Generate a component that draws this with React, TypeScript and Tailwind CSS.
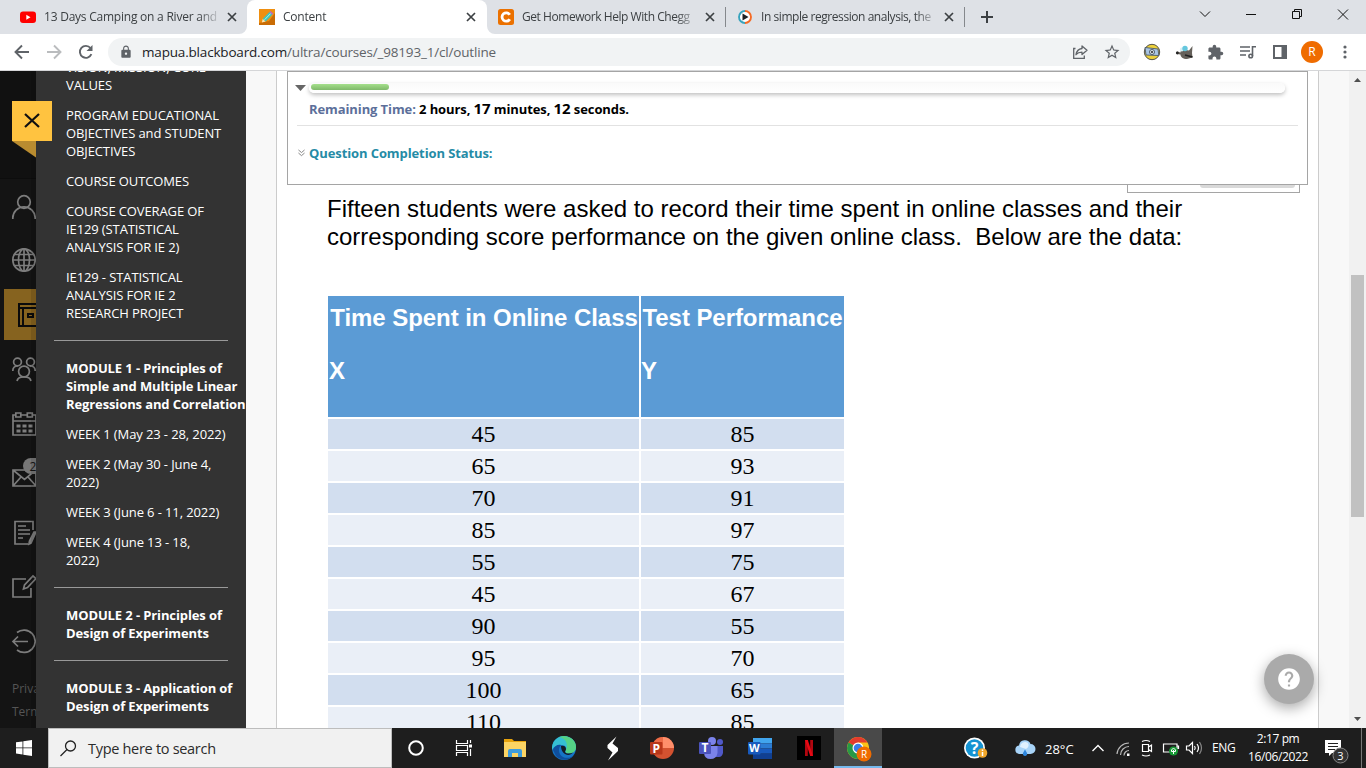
import React from 'react';
import { MdExtension, MdLock, MdStarBorder, MdHelp } from 'react-icons/md';

interface TabProps {
  title: string;
  icon: React.ReactNode;
  active?: boolean;
  separator?: boolean;
  titleClass: string;
}

interface MenuSection {
  heading?: string;
  items: string[];
}

const menuSections: MenuSection[] = [
  {
    items: [
      'VISION, MISSION, CORE\nVALUES',
      'PROGRAM EDUCATIONAL\nOBJECTIVES and STUDENT\nOBJECTIVES',
      'COURSE OUTCOMES',
      'COURSE COVERAGE OF\nIE129 (STATISTICAL\nANALYSIS FOR IE 2)',
      'IE129 - STATISTICAL\nANALYSIS FOR IE 2\nRESEARCH PROJECT',
    ],
  },
  {
    heading: 'MODULE 1 - Principles of\nSimple and Multiple Linear\nRegressions and Correlation',
    items: [
      'WEEK 1 (May 23 - 28, 2022)',
      'WEEK 2 (May 30 - June 4,\n2022)',
      'WEEK 3 (June 6 - 11, 2022)',
      'WEEK 4 (June 13 - 18,\n2022)',
    ],
  },
  { heading: 'MODULE 2 - Principles of\nDesign of Experiments', items: [] },
  { heading: 'MODULE 3 - Application of\nDesign of Experiments', items: [] },
];

const scores: [number, number][] = [
  [45, 85],
  [65, 93],
  [70, 91],
  [85, 97],
  [55, 75],
  [45, 67],
  [90, 55],
  [95, 70],
  [100, 65],
  [110, 85],
];

const Tab: React.FC<TabProps> = ({ title, icon, active, separator, titleClass }) => (
  <div
    className={`relative flex h-[34px] shrink-0 items-center ${
      active ? 'w-[240px] rounded-t-lg bg-white pl-3' : 'w-[239px] pl-[11px]'
    }`}
  >
    {active && (
      <>
        <svg className="absolute bottom-0 -left-2" width="8" height="8" viewBox="0 0 8 8">
          <path d="M8 0v8H0a8 8 0 0 0 8-8z" fill="#fff" />
        </svg>
        <svg className="absolute -right-2 bottom-0" width="8" height="8" viewBox="0 0 8 8">
          <path d="M0 0v8h8a8 8 0 0 1-8-8z" fill="#fff" />
        </svg>
      </>
    )}
    <div className="flex w-6 shrink-0">{icon}</div>
    <div className="w-[174px] shrink-0 overflow-hidden text-xs leading-4 whitespace-nowrap text-[#3c4043] [mask-image:linear-gradient(to_right,#000_154px,transparent_178px)]">
      <span className={titleClass}>{title}</span>
    </div>
    <svg className="ml-[9px]" width="10" height="10" viewBox="0 0 10 10" stroke="#3c4043" strokeWidth="1.7">
      <path d="M1 1l8 8M9 1L1 9" />
    </svg>
    {separator && <div className="absolute top-[7px] right-0 h-5 w-px bg-[#85888c]" />}
  </div>
);

// Tab strip with window controls
const TabStrip: React.FC = () => (
  <div className="flex h-[34px] bg-[#dee1e6]">
    <div className="flex w-[247px] shrink-0 pl-[9px]">
      <Tab
        title="13 Days Camping on a River and"
        titleClass="tracking-[-0.23px]"
        icon={
          <svg width="16" height="16" viewBox="0 0 16 16">
            <rect y="2.5" width="16" height="11.5" rx="3" fill="#f00" />
            <path d="M6.3 5.8v5l4.2-2.5z" fill="#fff" />
          </svg>
        }
      />
    </div>
    <Tab
      active
      title="Content"
      titleClass="tracking-[-0.22px]"
      icon={
        <svg width="16" height="16" viewBox="0 0 16 16">
          <rect width="16" height="16" fill="#ef8f10" />
          <path d="M16 4v12H0v-2l10-2z" fill="#c96c05" />
          <path d="M2.8 13.6l1-3.8 2.9 2.7z" fill="#f8e3b5" />
          <path d="M3.8 9.8L10.4 3l2.9 2.8-6.6 6.7z" fill="#3fc4ba" />
          <path d="M5.5 10.8l6.3-6.4" stroke="#b5f0e4" />
          <path d="M10.4 3l1-1 3 2.8-1.1 1z" fill="#b36bd2" />
        </svg>
      }
    />
    <Tab
      separator
      title="Get Homework Help With Chegg"
      titleClass="tracking-[-0.45px]"
      icon={
        <svg width="16" height="16" viewBox="0 0 16 16">
          <rect width="16" height="16" rx="2.5" fill="#eb7100" />
          <path d="M11.8 10.2A4.2 4.2 0 1 1 11.8 5.8" fill="none" stroke="#fff" strokeWidth="2.8" />
        </svg>
      }
    />
    <Tab
      separator
      title="In simple regression analysis, the"
      titleClass="tracking-[-0.44px]"
      icon={
        <svg width="16" height="16" viewBox="0 0 16 16">
          <circle cx="8" cy="8" r="6.5" fill="#fff" />
          <path d="M8 2a6 6 0 0 0 0 12" fill="none" stroke="#37a3bd" strokeWidth="1.9" />
          <path d="M8 2a6 6 0 0 1 0 12" fill="none" stroke="#f46a25" strokeWidth="1.9" />
          <path d="M5.5 4.5v7L11.5 8z" fill="#1d2023" />
        </svg>
      }
    />
    <svg className="mt-[11px] ml-4" width="12" height="12" viewBox="0 0 12 12" stroke="#3c4043" strokeWidth="2">
      <path d="M6 0v12M0 6h12" />
    </svg>
    <svg className="ml-auto" width="184" height="34" viewBox="1182 0 184 34" fill="none" stroke="#111" strokeWidth="1">
      <path d="M1200 11.5l5 5 5-5" />
      <path d="M1246 14.5h10" />
      <path d="M1292.5 11.5h7v7h-7zM1294.5 11.5v-2h7v7h-2" />
      <path d="M1338 9.5l10 10M1348 9.5l-10 10" />
    </svg>
  </div>
);

const Toolbar: React.FC = () => (
  <div className="flex h-[37px] shrink-0 items-center border-b border-[#d5d6d8] bg-white">
    <svg className="shrink-0" width="108" height="36" viewBox="0 0 108 36" fill="none" stroke="#5f6368" strokeWidth="1.9">
      <path d="M29 18H16M22 11.5L15.5 18l6.5 6.5" />
      <path d="M47 18h13M54 11.5L60.5 18 54 24.5" stroke="#babcbe" />
      <path d="M91.4 20.2a6 6 0 1 1-.9-6.200" />
      <path d="M92.5 11v6h-6z" fill="#5f6368" stroke="none" />
    </svg>
    <div className="flex h-7 w-[1022px] shrink-0 items-center rounded-full bg-[#f1f3f4] pl-[11px]">
      <MdLock size={14} className="text-[#5f6368]" />
      <div className="ml-[9px] text-[13.5px] leading-5 tracking-[-0.18px] whitespace-nowrap text-[#5f6368]">
        <span className="text-[#202124]">mapua.blackboard.com</span>/ultra/courses/_98193_1/cl/outline
      </div>
      <svg className="mr-3.5 ml-auto" width="17" height="16" viewBox="0 0 17 16" fill="none" stroke="#5f6368" strokeWidth="1.3">
        <path d="M3.5 4.5H1.7v9.8h10.6v-2.8" />
        <path d="M10 2l5 4.3-5 4.3V8.2c-2.7 0-4.4.6-6 2.5.5-3.2 2.5-5.8 6-6.2z" strokeLinejoin="round" />
      </svg>
      <MdStarBorder size={18} className="mr-[9px] text-[#5f6368]" />
    </div>
    <svg className="shrink-0" width="44" height="22" viewBox="0 0 44 22">
      <circle cx="22" cy="11" r="7.7" fill="#ecd03a" stroke="#444" strokeWidth=".9" />
      <path d="M15 6.500l13 1.500.8 6.500-12.800-.5z" fill="#a9c5e4" stroke="#4a5868" strokeWidth=".9" />
      <circle cx="22" cy="11" r="2.500" fill="#dfe8ef" stroke="#4b5966" />
      <circle cx="22" cy="11" r="1" fill="#222" />
    </svg>
    <svg className="shrink-0" width="24" height="22" viewBox="0 0 24 22">
      <path d="M3 10.5l3.5 1L7 9h5l3 .5L18.5 5l-.5 7 .5 4.500-5.500 1.500c-4 0-6.500-2-6.500-4.500L3 13z" fill="#65605a" />
      <circle cx="7.800" cy="8.500" r="1.900" fill="#d9f1f7" />
      <circle cx="11" cy="7.500" r="2.700" fill="#65c7de" />
      <circle cx="3.300" cy="12" r="1.400" fill="#222" />
      <path d="M11 14l7.500 2" stroke="#222" strokeWidth="1.700" />
    </svg>
    <div className="ml-auto flex h-9 items-center">
      <MdExtension size={17} className="mr-4 text-[#5f6368]" />
      <svg className="mr-[17px]" width="16" height="16" viewBox="0 0 16 16" fill="none" stroke="#5f6368" strokeWidth="1.6">
        <path d="M0 3h10M0 7h10M0 11h6M16 2.800h-3.500V12" />
        <circle cx="10.700" cy="12" r="1.800" />
      </svg>
      <svg className="mr-[14px]" width="14" height="14" viewBox="0 0 14 14">
        <path d="M1 1h12v12H1z" fill="none" stroke="#5f6368" strokeWidth="2" />
        <path d="M8.500 1H13v12H8.500z" fill="#5f6368" />
      </svg>
      <div className="flex size-[22px] items-center justify-center rounded-full bg-[#ef6c00] text-xs text-white">R</div>
      <svg className="mr-[19px] ml-5" width="4" height="14" viewBox="0 0 4 14" fill="#5f6368">
        <circle cx="2" cy="2" r="1.6" />
        <circle cx="2" cy="7" r="1.6" />
        <circle cx="2" cy="12" r="1.6" />
      </svg>
    </div>
  </div>
);

const railIcons: React.ReactNode[] = [
  // Profile
  <g key="profile">
    <circle cx="24" cy="22" r="6.3" />
    <path d="M12.800 39v-1a11.200 11.200 0 0 1 22.400 0v1" />
  </g>,
  // Institution page
  <g key="globe">
    <circle cx="24" cy="26" r="11.2" />
    <ellipse cx="24" cy="26" rx="5.5" ry="11.2" />
    <path d="M24 15v22M13 26h22M14.500 20.500h19M14.500 31.500h19" />
  </g>,
  // Courses
  <g key="courses">
    <path d="M4 1h32v51H4z" fill="#86631f" stroke="none" />
    <g stroke="#0b0b0b" strokeWidth="2">
      <path d="M40 16H19v22h21M19 20h20M23 20v18M28 26h5v3h-5z" />
    </g>
  </g>,
  // Organizations
  <g key="orgs">
    <circle cx="17.5" cy="20" r="3.9" />
    <circle cx="30.5" cy="20" r="3.9" />
    <circle cx="24" cy="29.5" r="5.4" />
    <path d="M12.800 29c0-3 2-5 5-5M35.200 29c0-3-2-5-5-5M17 39c.5-3 3.500-4.200 7-4.200s6.500 1.200 7 4.200" />
  </g>,
  // Calendar
  <g key="calendar">
    <path d="M13 19h23v20H13zM13 25h23" />
    <path d="M15.800 17h5v4h-5zM27.300 17h5v4h-5z" fill="#141414" />
    <path d="M16.500 30h4M22.500 30h4M28.500 30h4M16.500 35h4M22.500 35h4M28.500 35h4" strokeWidth="2.8" />
  </g>,
  // Messages
  <g key="messages">
    <path d="M13 20h23v16H13zM13 20l11.500 9.500L36 20M13 36l8-9M36 36l-8-9" />
    <rect x="23" y="8" width="26" height="16" rx="8" fill="#777" stroke="none" />
    <text x="29.5" y="20.5" fill="#161616" stroke="none" fontSize="12">2</text>
  </g>,
  // Grades
  <g key="grades">
    <path d="M33 26v-8.500H15V40h13M18 22h8M18 26h12M18 30h12M18 34h5" />
    <path d="M36 28l-5 11-2 1 .5-3L34 28z" fill="#777" />
  </g>,
  // Tools
  <g key="tools">
    <path d="M26 21H13v18h18V30" />
    <path d="M33 18l3 2.500-8.500 9-4 1.500 1-4z" />
  </g>,
  // Sign out
  <g key="signout">
    <path d="M17 20.500a11.200 11.200 0 1 1 0 17.500M13 29.500h15M18 24.500l-5 5 5 5" />
  </g>,
];

const CourseRail: React.FC = () => (
  <div className="relative flex w-9 shrink-0 flex-col overflow-hidden bg-[#141414]">
    <div className="mb-px h-[108px] shrink-0 border-b border-[#0d0d0d] bg-[#111]" />
    {railIcons.map((icon, index) => (
      <svg
        key={index}
        className="shrink-0"
        width="36"
        height="54"
        viewBox="0 0 36 54"
        fill="none"
        stroke="#7d7d7d"
        strokeWidth="1.7"
      >
        {icon}
      </svg>
    ))}
    <div className="mt-[11px] pl-3 text-xs leading-[23px] whitespace-nowrap text-[#555]">
      <p>Privacy</p>
      <p>Terms</p>
    </div>
    <div className="absolute inset-y-0 right-0 w-[5px] bg-black/10" />
  </div>
);

const CourseMenu: React.FC = () => (
  <div className="w-[210px] shrink-0 overflow-hidden bg-[#333] text-[13px] leading-[18px] text-white">
    <div className="-mt-[13px]">
      {menuSections.map((section, index) => (
        <div key={index} className="whitespace-pre">
          {index > 0 && <div className="my-[18px] ml-[18px] h-px w-[174px] bg-[#999]" />}
          <div className="flex flex-col gap-3 pl-[30px]">
            {section.heading && <p className="font-bold tracking-[-0.11px]">{section.heading}</p>}
            {section.items.map((item) => (
              <p key={item} className="tracking-[-0.11px]">
                {item}
              </p>
            ))}
          </div>
        </div>
      ))}
    </div>
  </div>
);

const TimerPanel: React.FC = () => (
  <div className="relative ml-[10px] h-[114px] w-[1021px] shrink-0 border border-[#a5a5a5] bg-white text-[13px] font-bold tracking-[-0.1px]">
    <div className="flex pt-[11px] pl-[7px]">
      <svg className="mt-0.5" width="11" height="6" viewBox="0 0 11 6">
        <path d="M0 0h11L5.500 6z" fill="#666" />
      </svg>
      <div className="ml-[3px] h-[10px] w-[976px] rounded-full bg-gradient-to-b from-[#fafafa] to-white p-0.5 pt-px shadow-[0_2px_4px_rgba(0,0,0,0.25)]">
        <div className="h-[6px] w-[78px] rounded-full bg-gradient-to-b from-[#a5e08c] to-[#7fb96a]" />
      </div>
    </div>
    <div className="mt-[3px] ml-[21px] h-[25px] leading-[25px] text-black">
      <span className="text-[#5c6f9a]">Remaining Time:</span> 2 hours, <span className="text-[15px]">17</span> minutes,{' '}
      <span className="text-[15px]">12</span> seconds.
    </div>
    <div className="mt-1 ml-[9px] h-px w-[1001px] bg-[#e2e2e2]" />
    <div className="mt-[17px] flex items-center pl-[10px] leading-5 text-[#258ba6]">
      <svg className="mr-1" width="7" height="8" viewBox="0 0 8 8" fill="none" stroke="#777">
        <path d="M.5.5L4 3.500 7.500.5M.5 4L4 7l3.500-3" />
      </svg>
      Question Completion Status:
    </div>
  </div>
);

const ScoreTable: React.FC = () => (
  <div className="mt-[45px] ml-[51px] flex flex-col gap-0.5 text-2xl">
    <div className="flex h-[121px] shrink-0 gap-0.5 font-['Liberation_Sans',sans-serif] leading-7 font-bold whitespace-nowrap text-white">
      <div className="w-[311px] bg-[#5b9bd5] pt-2 pl-px">
        <p className="text-center tracking-[-0.06px]">Time Spent in Online Class</p>
        <p className="mt-[25px]">X</p>
      </div>
      <div className="w-[203px] bg-[#5b9bd5] pt-2">
        <p className="text-center tracking-[-0.06px]">Test Performance</p>
        <p className="mt-[25px]">Y</p>
      </div>
    </div>
    {scores.map(([x, y], index) => {
      const rowColor = index % 2 === 0 ? 'bg-[#d2deef]' : 'bg-[#eaeff7]';
      return (
        <div key={index} className="flex h-[30px] shrink-0 gap-0.5 text-center font-['Liberation_Serif',serif] leading-[30px] text-black">
          <div className={`w-[311px] ${rowColor}`}>{x}</div>
          <div className={`w-[203px] ${rowColor}`}>{y}</div>
        </div>
      );
    })}
  </div>
);

const Taskbar: React.FC = () => (
  <div className="flex h-10 shrink-0 items-stretch bg-[#1e1e1e] text-white">
    <div className="flex w-12 shrink-0 items-center justify-center">
      <svg width="16" height="16" viewBox="0 0 16 16" fill="#fff">
        <path d="M0 2.300l6.500-.9v6.100H0zM7.300 1.300L16 0v7.500H7.300zM0 8.300h6.500v6.200L0 13.600zM7.300 8.300H16V16l-8.700-1.300z" />
      </svg>
    </div>
    <div className="flex w-[344px] shrink-0 items-center border border-[#bdbdbd] bg-[#f1f1f1] pl-[11px] text-[#2b2b2b]">
      <svg width="17" height="17" viewBox="0 0 17 17" fill="none" stroke="#222" strokeWidth="1.3">
        <circle cx="10.5" cy="6" r="5" />
        <path d="M7 9.500L.5 16" />
      </svg>
      <span className="mt-px ml-[11px] text-[14.5px] tracking-[-0.3px]">Type here to search</span>
    </div>
    {/* Pinned apps, drawn on one strip */}
    <svg className="shrink-0" width="490" height="40" viewBox="392 728 490 40">
      <circle cx="416" cy="748" r="6.8" fill="none" stroke="#fff" strokeWidth="2" />
      <path d="M456.500 740v3.500h11V740M456.500 756v-3.500h11V756M456.500 745.500h11v5h-11zM470.500 740v3M470.500 749v7" fill="none" stroke="#fff" strokeWidth="1.2" />
      <path d="M469 744.500h3v3h-3z" fill="#fff" />
      {/* File Explorer */}
      <path d="M504 739h8l2 2h12v16h-22z" fill="#e7a30d" />
      <path d="M504 742h22v15h-22z" fill="#fbd464" />
      <path d="M508 757v-6q0-2 2-2h10q2 0 2 2v6h-4v-4h-6v4z" fill="#3d9cdd" />
      {/* Edge */}
      <circle cx="564" cy="748" r="12" fill="#1674c5" />
      <path d="M552 747c1-7 6-11 12-11 7 0 12 5 12 11 0 4-3 6.500-6.500 6.500-3 0-4.500-1-4-2.500 2-3 0-6-4-6-5 0-8 2-9.500 5z" fill="#35bfd2" />
      <path d="M563 736c8 0 13 5 13 11 0 4-3 6.500-6.500 6.500-3 0-4.500-1-4-2.500C568 746 568 739 559 737z" fill="#5fd86b" opacity=".75" />
      <path d="M553 750c1-4 5-6 8-5-3 3-3 9 2 12 3 1.500 7 1 10-1-4 5-12 5-17 0z" fill="#0f4f9d" />
      <path d="M561 746c2-1 5 0 5 3 0 1-1 2-1 3 1 2 5 2 8 .5-4 5-12 2-12-6.500z" fill="#151b24" />
      {/* S shortcut */}
      <path d="M616.500 736.500l-9 8.500v3l5 4.500-4.500 8 10-9.500v-3l-5.500-4.500z" fill="#fff" />
      {/* PowerPoint */}
      <circle cx="663" cy="748" r="11" fill="#d35230" />
      <path d="M663 737a11 11 0 0 1 11 11h-11z" fill="#ff8f6b" />
      <path d="M663 737v11h-11a11 11 0 0 1 11-11z" fill="#ed6c47" />
      <rect x="650" y="742" width="12.500" height="12.500" rx="1" fill="#b9371a" />
      <text x="656.300" y="752.500" fontSize="12" fontWeight="700" fill="#fff" textAnchor="middle">P</text>
      {/* Teams */}
      <circle cx="712" cy="741" r="4" fill="#7b83eb" />
      <circle cx="720" cy="742" r="3" fill="#5059c9" />
      <path d="M715 746h8v7q-1 4-4 4h-4z" fill="#5059c9" />
      <path d="M704 746h13.500v7q-1 6-7 6t-6.500-6z" fill="#7b83eb" />
      <rect x="699" y="742" width="12" height="12" rx="1" fill="#4b53bc" />
      <text x="705" y="752.300" fontSize="12" fontWeight="700" fill="#fff" textAnchor="middle">T</text>
      {/* Word */}
      <path d="M753 738h19v5.300h-19z" fill="#41a5ee" />
      <path d="M753 743.300h19v5.200h-19z" fill="#2b7cd3" />
      <path d="M753 748.500h19v5.200h-19z" fill="#185abd" />
      <path d="M753 753.700h19v5.300h-19z" fill="#103f91" />
      <rect x="748" y="742" width="12.500" height="12.500" rx="1" fill="#185abd" />
      <text x="754.300" y="752.300" fontSize="11" fontWeight="700" fill="#fff" textAnchor="middle">W</text>
      {/* Netflix */}
      <path d="M797 736h24v24h-24z" fill="#000" />
      <path d="M805 740h2.800v16H805zM810.200 740h2.800v16h-2.800z" fill="#b1060f" />
      <path d="M805 740h2.800l5.200 16h-2.800z" fill="#e50914" />
      {/* Chrome */}
      <path d="M834 728h48v38h-48z" fill="#494949" />
      <path d="M834 766h48v2h-48z" fill="#76b9ed" />
      <circle cx="858" cy="748" r="11" fill="#fbc116" />
      <path d="M858 748l-9.500-5.500a11 11 0 0 1 19 0H858z" fill="#e33b2e" />
      <path d="M858 748l-9.500-5.500A11 11 0 0 0 858 759l3-5z" fill="#279847" />
      <circle cx="858" cy="748" r="5.500" fill="#fff" />
      <circle cx="858" cy="748" r="4.300" fill="#3b7de9" />
      <circle cx="864" cy="754" r="7.500" fill="#ef6c00" />
      <text x="864" y="757.500" fontSize="10" fill="#fff" textAnchor="middle">R</text>
    </svg>
    {/* System tray */}
    <div className="ml-auto flex items-center text-xs whitespace-nowrap">
      <svg width="80" height="40" viewBox="960 728 80 40">
        <circle cx="975.5" cy="748" r="10.5" fill="#fff" />
        <circle cx="975.5" cy="748" r="8.8" fill="#1593d2" />
        <text x="975.5" y="754" fontSize="16" fontWeight="700" fill="#fff" textAnchor="middle">?</text>
        <circle cx="983.5" cy="753" r="4.8" fill="#f2a72b" />
        <path d="M983.500 752v4M983.500 749.500v1.500" stroke="#fff" strokeWidth="1.5" />
        <path d="M1020 754a4.300 4.300 0 0 1 0-8.500 6 6 0 0 1 11.500-1.500 5 5 0 0 1 0 10z" fill="#a8d4f8" />
        <path d="M1021 747a5 5 0 0 1 8-4 6 5 0 0 1-2 6z" fill="#e0f1fe" />
        <path d="M1026 749.500l2 3.500a2.200 2.200 0 1 1-4 0z" fill="#2d86dd" />
      </svg>
      <span className="mt-0.5 ml-[6px] w-[39px] text-[13px] leading-5">28°C</span>
      <svg width="125" height="40" viewBox="1085 728 125 40" fill="none" stroke="#fff" strokeWidth="1.2">
        <path d="M1093.500 751l5.500-5.500 5.500 5.500" strokeWidth="1.4" />
        <path d="M1118 754a12 12 0 0 1 12-11M1121.500 755a8.500 8.500 0 0 1 8.500-8.500M1125 755.500a5 5 0 0 1 5-5" stroke="#bbb" />
        <path d="M1128 753.500h2.500v2.500h-2.500z" fill="#fff" stroke="none" />
        <path d="M1143.500 744.500h6v7h-6zM1149.500 747l3-2v6.500l-3-2M1143 741.500q4-2 8 0M1143 755q4 2 8 0" />
        <path d="M1178 749v-5h-13.500v8h8M1178 746h1.500v3" />
        <circle cx="1174.5" cy="751" r="4.5" fill="#169a35" stroke="none" />
        <path d="M1174.500 754v-4M1172.500 750l2-2 2 2v1.500h-4z" strokeWidth="1" />
        <path d="M1187.500 746h2.500l3.500-3.500v11l-3.500-3.500h-2.500zM1195.500 746q1.500 2 0 4M1198 744q3 4 0 8" />
        <path d="M1200.500 742q4 6 0 12" stroke="#888" />
      </svg>
      <span className="ml-[3px] w-[36px] tracking-[-0.3px]">ENG</span>
      <div className="w-[60px] text-center leading-[18px] tracking-[-0.38px]">
        <p>2:17 pm</p>
        <p>16/06/2022</p>
      </div>
      <svg width="58" height="40" viewBox="1308 728 58 40">
        <path d="M1325 740h16v13h-9l-3 3v-3h-4z" fill="#fff" />
        <path d="M1328 743.500h10M1328 746.500h10M1328 749.500h7" stroke="#222" />
        <circle cx="1340.5" cy="755.5" r="7.5" fill="#333" stroke="#858585" />
        <text x="1340.5" y="759.5" fontSize="11" fill="#fff" textAnchor="middle">3</text>
        <path d="M1361.500 728v40" stroke="#777" />
      </svg>
    </div>
  </div>
);

const App: React.FC = () => {
  return (
    <div className="flex h-[768px] w-[1366px] flex-col overflow-hidden bg-white font-['Open_Sans','Noto_Sans',sans-serif]">
      <TabStrip />
      <Toolbar />

      {/* Page */}
      <div className="relative flex h-[657px] shrink-0 overflow-hidden">
        <CourseRail />
        <CourseMenu />
        <svg className="absolute top-[30px] left-3" width="40" height="57" viewBox="0 0 40 57">
          <path d="M0 40h24v16.500z" fill="#b98c30" />
          <path d="M0 0h40v40H0z" fill="#ffc340" />
          <path d="M13 13l14 13M27 13L13 26" stroke="#111" strokeWidth="2.2" />
        </svg>

        <div className="flex flex-1 overflow-hidden bg-[#f8f8f8] px-[30px]">
          <div className="flex w-[1043px] shrink-0 flex-col overflow-hidden border-x border-[#ccc] bg-white">
            <TimerPanel />
            <div className="ml-[850px] h-2 w-[173px] shrink-0 border-x border-b border-[#a5a5a5] pl-[72px]">
              <div className="h-[3px] w-[95px] rounded-b-sm bg-[#d9d9d9]" />
            </div>
            <p className="mt-0.5 ml-[50px] h-14 shrink-0 font-['Liberation_Sans',sans-serif] text-2xl leading-7 whitespace-pre text-black">
              {'Fifteen students were asked to record their time spent in online classes and their\ncorresponding score performance on the given online class.  Below are the data:'}
            </p>
            <ScoreTable />
          </div>
        </div>

        {/* Scrollbar */}
        <div className="flex w-[17px] shrink-0 flex-col items-center bg-[#f1f1f1]">
          <svg className="mt-[7px]" width="7" height="4" viewBox="0 0 7 4" fill="#505050">
            <path d="M0 4h7L3.500 0z" />
          </svg>
          <div className="mt-[193px] h-[242px] w-[13px] bg-[#c1c1c1]" />
          <svg className="mt-auto mb-[7px]" width="7" height="4" viewBox="0 0 7 4" fill="#505050">
            <path d="M0 0h7L3.500 4z" />
          </svg>
        </div>

        {/* Help button */}
        <div className="absolute top-[583px] left-[1264px] flex size-[50px] items-center justify-center rounded-full bg-[#aaa] shadow-[0_4px_14px_rgba(0,0,0,0.35)]">
          <MdHelp size={26} className="text-white" />
        </div>
      </div>

      <Taskbar />
    </div>
  );
};

export default App;
